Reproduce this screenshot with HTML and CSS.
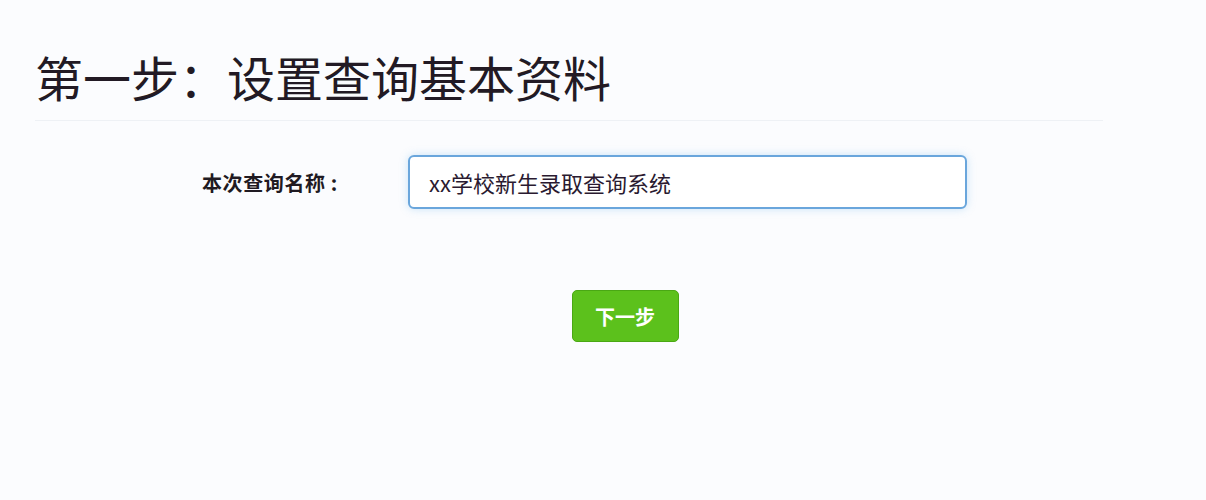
FILE: index.html
```html
<!DOCTYPE html>
<html lang="zh-CN">
<head>
    <meta charset="UTF-8">
    <meta name="viewport" content="width=device-width, initial-scale=1.0">
    <title>设置查询基本资料</title>
    <link rel="stylesheet" href="styles.css">
</head>
<body>
    <div class="page">
        <h1 class="step-title">第一步：设置查询基本资料</h1>
        <form class="step-form" id="stepForm">
            <div class="form-row">
                <label for="queryName" class="form-label">本次查询名称 :</label>
                <input type="text" id="queryName" class="form-input" value="xx学校新生录取查询系统">
            </div>
            <div class="form-actions">
                <button type="submit" class="btn-next">下一步</button>
            </div>
        </form>
    </div>
</body>
</html>
```

FILE: styles.css
```css
body {
    margin: 0;
    padding: 0;
    background-color: #fbfcfe;
    font-family: "Noto Sans CJK SC", "Noto Sans", sans-serif;
    color: #241a26;
}

.page {
    padding: 0 103px 0 35px;
}

.step-title {
    margin: 0;
    padding-top: 44px;
    padding-bottom: 12px;
    font-size: 48px;
    font-weight: 400;
    line-height: 64px;
    color: #221a24;
    border-bottom: 1px solid #eef1f5;
}

.step-form {
    display: flex;
    flex-direction: column;
}

.form-row {
    display: flex;
    align-items: center;
    margin-top: 34px;
    padding-left: 167px;
}

.form-label {
    width: 206px;
    font-size: 20px;
    font-weight: 700;
    letter-spacing: 0.6px;
    color: #1f1a22;
}

.form-input {
    box-sizing: border-box;
    width: 559px;
    height: 54px;
    padding: 0 19px;
    font-family: "Noto Sans CJK SC", "Noto Sans", sans-serif;
    font-size: 22px;
    color: #2a1a30;
    background: #fff;
    border: 2px solid #6aa6dc;
    border-radius: 6px;
    box-shadow: 0 0 8px rgba(110, 180, 235, 0.35);
    outline: none;
}

.form-actions {
    display: flex;
    justify-content: center;
    margin-top: 81px;
    padding-left: 112px;
}

.btn-next {
    width: 107px;
    height: 52px;
    font-family: "Noto Sans CJK SC", "Noto Sans", sans-serif;
    font-size: 20px;
    font-weight: 700;
    color: #fff;
    background-color: #5cc11c;
    border: 1px solid #4aa814;
    border-radius: 5px;
    cursor: pointer;
}

.btn-next:hover {
    background-color: #4fae14;
}
```
